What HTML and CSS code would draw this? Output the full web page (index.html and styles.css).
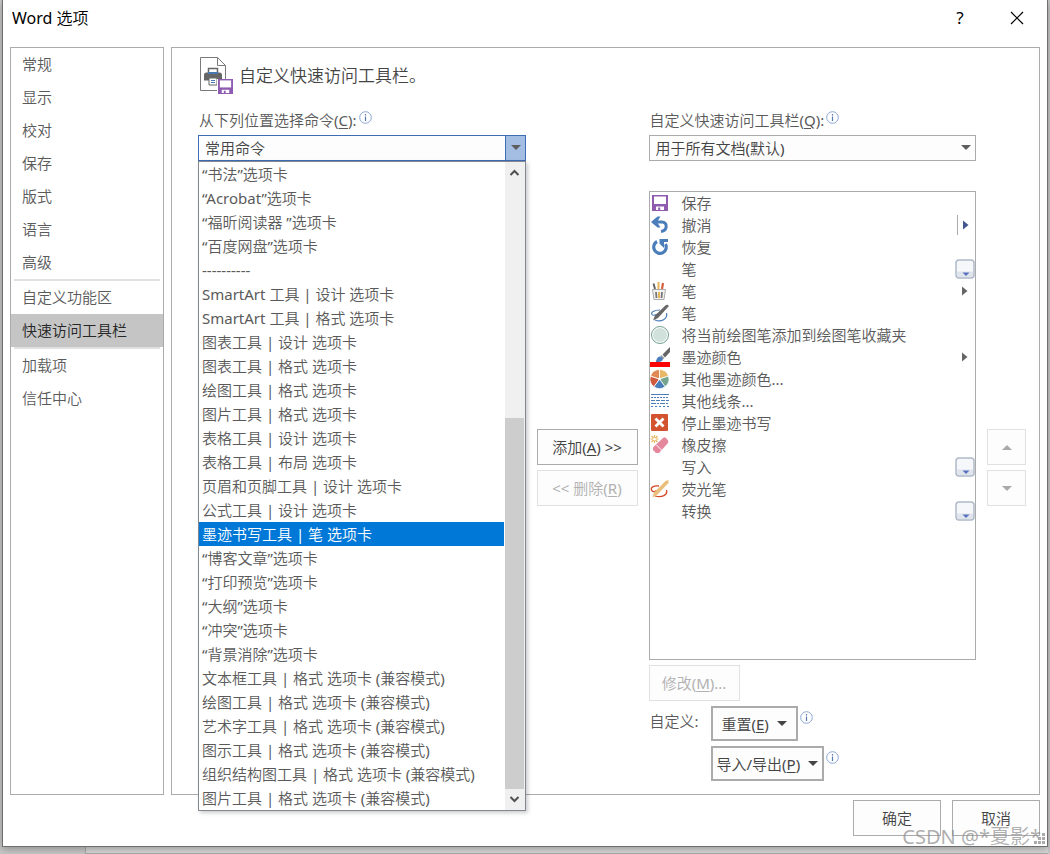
FILE: index.html
```html
<!DOCTYPE html>
<html lang="zh-CN">
<head>
  <meta charset="UTF-8">
  <meta name="viewport" content="width=device-width, initial-scale=1.0">
  <title>Word 选项</title>
  <link rel="stylesheet" href="styles.css">
</head>
<body>
  <!-- 共用图标 -->
  <svg class="symbols" aria-hidden="true">
    <symbol id="info" viewBox="0 0 13 13">
      <circle cx="6.5" cy="6.5" r="5.8" fill="#fff" stroke="#8ba6d3"/>
      <path d="M6.5 5.5v4.5M6.5 3v1.4" stroke="#5878b0" stroke-width="1.2"/>
    </symbol>
    <symbol id="gallery" viewBox="0 0 20 20">
      <rect x="1" y="1" width="18" height="18" rx="3" fill="#f5f7fa" stroke="#afbac8" stroke-width="1.5"/>
      <path d="M2 12.5h16v4q0 1.5-1.5 1.5h-13q-1.5 0-1.5-1.5z" fill="#e0e4ec"/>
      <path d="M7.500 13.500h7l-3.500 3.500z" fill="#5871c0"/>
    </symbol>
    <symbol id="right" viewBox="0 0 6 10">
      <path d="M0 .5l5.500 4.500L0 9.500z" fill="#666"/>
    </symbol>
    <symbol id="floppy" viewBox="0 0 16 16">
      <path d="M0 0h16v16H0z" fill="#8e5bb0"/>
      <path d="M2 1.500h12V9H2z" fill="#fff"/>
      <path d="M4 11.500h8V15H4z" fill="#fff"/>
      <path d="M6.200 12.500h2V15h-2z" fill="#8e5bb0"/>
    </symbol>
  </svg>

  <div class="dialog">
    <header class="titlebar">
      <h1>Word 选项</h1>
      <button class="title-btn" type="button" aria-label="帮助">?</button>
      <button class="title-btn" type="button" aria-label="关闭">
        <svg width="14" height="14" viewBox="0 0 14 14"><path d="M1 1l12 12M13 1L1 13" stroke="#000" stroke-width="1.2"/></svg>
      </button>
    </header>

    <div class="main">
      <nav class="sidebar">
        <a href="#">常规</a>
        <a href="#">显示</a>
        <a href="#">校对</a>
        <a href="#">保存</a>
        <a href="#">版式</a>
        <a href="#">语言</a>
        <a href="#">高级</a>
        <hr>
        <a href="#">自定义功能区</a>
        <a href="#" class="active">快速访问工具栏</a>
        <hr>
        <a href="#">加载项</a>
        <a href="#">信任中心</a>
      </nav>

      <section class="panel">
        <div class="heading">
          <svg width="35" height="38" viewBox="0 0 35 38">
            <path d="M1.500.5h17l8 8v25h-25z" fill="#fff" stroke="#7a7a7a"/>
            <path d="M18.500.5v8h8" fill="none" stroke="#7a7a7a"/>
            <path d="M9.500 17v-5.500h9V17" fill="#fff" stroke="#666" stroke-width="1.5"/>
            <path d="M5 18q0-2.500 2.500-2.500H9V17h10v-1.500h1.500q2.500 0 2.500 2.500v5.500H5z" fill="#666"/>
            <path d="M9 16h10" stroke="#4878b0" stroke-width="2"/>
            <path d="M10 21h8v7h-8z" fill="#fff" stroke="#666"/>
            <path d="M12 23.500h4M12 25.500h4" stroke="#4878b0"/>
            <path d="M18 22h17v16H18z" fill="#fff"/>
            <use href="#floppy" x="19" y="22" width="15" height="15"/>
          </svg>
          <h2>自定义快速访问工具栏。</h2>
        </div>

        <div class="columns">
          <div class="col">
            <div class="label-row">
              <label for="source">从下列位置选择命令(<u>C</u>):</label>
              <svg class="info"><use href="#info"/></svg>
            </div>
            <div class="select open">
              <select id="source">
                <option>常用命令</option>
              </select>
              <div class="menu">
                <ul role="listbox" aria-label="命令位置">
                  <li role="option">“书法”选项卡</li>
                  <li role="option">“Acrobat”选项卡</li>
                  <li role="option">“福昕阅读器 ”选项卡</li>
                  <li role="option">“百度网盘”选项卡</li>
                  <li role="option">----------</li>
                  <li role="option">SmartArt 工具 | 设计 选项卡</li>
                  <li role="option">SmartArt 工具 | 格式 选项卡</li>
                  <li role="option">图表工具 | 设计 选项卡</li>
                  <li role="option">图表工具 | 格式 选项卡</li>
                  <li role="option">绘图工具 | 格式 选项卡</li>
                  <li role="option">图片工具 | 格式 选项卡</li>
                  <li role="option">表格工具 | 设计 选项卡</li>
                  <li role="option">表格工具 | 布局 选项卡</li>
                  <li role="option">页眉和页脚工具 | 设计 选项卡</li>
                  <li role="option">公式工具 | 设计 选项卡</li>
                  <li role="option" class="selected" aria-selected="true">墨迹书写工具 | 笔 选项卡</li>
                  <li role="option">“博客文章”选项卡</li>
                  <li role="option">“打印预览”选项卡</li>
                  <li role="option">“大纲”选项卡</li>
                  <li role="option">“冲突”选项卡</li>
                  <li role="option">“背景消除”选项卡</li>
                  <li role="option">文本框工具 | 格式 选项卡 (兼容模式)</li>
                  <li role="option">绘图工具 | 格式 选项卡 (兼容模式)</li>
                  <li role="option">艺术字工具 | 格式 选项卡 (兼容模式)</li>
                  <li role="option">图示工具 | 格式 选项卡 (兼容模式)</li>
                  <li role="option">组织结构图工具 | 格式 选项卡 (兼容模式)</li>
                  <li role="option">图片工具 | 格式 选项卡 (兼容模式)</li>
                </ul>
                <div class="scrollbar">
                  <svg width="20" height="20" viewBox="0 0 20 20"><path d="M5.500 13L9.500 9l4 4" fill="none" stroke="#505050" stroke-width="2"/></svg>
                  <div class="thumb"></div>
                  <svg width="20" height="20" viewBox="0 0 20 20"><path d="M5.500 7l4 4 4-4" fill="none" stroke="#505050" stroke-width="2"/></svg>
                </div>
              </div>
            </div>
          </div>

          <div class="middle">
            <button type="button">添加(<u>A</u>) &gt;&gt;</button>
            <button type="button" disabled>&lt;&lt; 删除(<u>R</u>)</button>
          </div>

          <div class="col">
            <div class="label-row">
              <label for="target">自定义快速访问工具栏(<u>Q</u>):</label>
              <svg class="info"><use href="#info"/></svg>
            </div>
            <div class="select">
              <select id="target">
                <option>用于所有文档(默认)</option>
              </select>
            </div>
            <ul class="commands">
              <li><svg class="icon" viewBox="0 0 20 20"><use href="#floppy" x="2" y="2" width="16" height="16"/></svg>保存</li>
              <li>
                <svg class="icon" viewBox="0 0 20 20"><path d="M3 7h9c5.500 0 6 8.500-1 9.500" fill="none" stroke="#4a7ebb" stroke-width="3"/><path d="M1 7l6.500-5.500h3L7 7l3.500 5.500h-3z" fill="#4a7ebb"/></svg>撤消
                <span class="split"><svg width="6" height="10"><path d="M0 .5L5.500 5 0 9.500z" fill="#43558f"/></svg></span>
              </li>
              <li><svg class="icon" viewBox="0 0 20 20"><path d="M7 4.500A6.300 6.300 0 1 0 15.500 7" fill="none" stroke="#4a7ebb" stroke-width="3.200"/><path d="M9.500 2H18v3h-4v6L9.500 6.500z" fill="#4a7ebb"/></svg>恢复</li>
              <li><span class="icon"></span>笔<svg class="gallery"><use href="#gallery"/></svg></li>
              <li>
                <svg class="icon" viewBox="0 0 20 20"><path d="M5 8L3.500 2.500" stroke="#666" stroke-width="2"/><path d="M8.500 8V1" stroke="#e8b45a" stroke-width="2"/><path d="M12 8l1-6" stroke="#d2603f" stroke-width="2.200"/><path d="M2.500 8.500h13l-1.500 10H4z" fill="#f2f2f2" stroke="#aaa"/><path d="M6 11l.5 6M12 11l-.5 6" stroke="#777" stroke-width="1.800"/><path d="M9 11v6" stroke="#e8b45a" stroke-width="2"/></svg>笔
                <svg class="arrow"><use href="#right"/></svg>
              </li>
              <li><svg class="icon" viewBox="0 0 20 20"><path d="M10 7C4 7 .5 9.500 2 11.500s5 0 7-1M5 17c6 2.500 13-1 11.500-7" fill="none" stroke="#4a7ebb" stroke-width="1.200"/><path d="M3 17.500l2-5L16 2q3-1 2.500 1.500L8 15z" fill="#666"/></svg>笔</li>
              <li><svg class="icon" viewBox="0 0 20 20"><circle cx="10" cy="10" r="8.500" fill="#fff" stroke="#70a090"/><circle cx="10" cy="10" r="7" fill="#d0e2db"/></svg>将当前绘图笔添加到绘图笔收藏夹</li>
              <li>
                <svg class="icon" viewBox="0 0 20 20"><path d="M12.500 7.500L20 0v5l-5 5.500z" fill="#666"/><path d="M11.500 8l3 3-1 1-3-3z" fill="#999"/><path d="M6 14c1-4 3-5 5-4.500l2 2c0 2-2 4-7 3.500z" fill="#4a7ebb"/><path d="M0 15h20v5H0z" fill="#f00"/></svg>墨迹颜色
                <svg class="arrow"><use href="#right"/></svg>
              </li>
              <li><svg class="icon" viewBox="0 0 20 20"><g stroke="#fff" stroke-width=".8"><path d="M9.500 10V.5a9.500 9.500 0 0 1 9 6.600z" fill="#e9b867"/><path d="M9.500 10l9-2.900a9.500 9.500 0 0 1-3.400 10.600z" fill="#75a58f"/><path d="M9.500 10l5.600 7.700a9.500 9.500 0 0 1-11.200 0z" fill="#4a7ebb"/><path d="M9.500 10l-5.600 7.700A9.500 9.500 0 0 1 .5 7.100z" fill="#cf5a3d"/><path d="M9.500 10l-9-2.900a9.500 9.500 0 0 1 9-6.600z" fill="#df8a55"/></g><circle cx="9.500" cy="10" r="1.300" fill="#fff"/></svg>其他墨迹颜色...</li>
              <li><svg class="icon" viewBox="0 0 20 20"><g stroke="#4a7ebb"><path d="M1 3.500h18"/><path d="M1 6.500h18" stroke-dasharray="2 1"/><path d="M1 9.500h18" stroke-dasharray="4 1"/><path d="M1 12.500h18" stroke-dasharray="5 1 2 1"/><path d="M1 15.500h18" stroke-dasharray="2 2"/></g></svg>其他线条...</li>
              <li><svg class="icon" viewBox="0 0 20 20"><rect x="1" y="1" width="17" height="17" rx="1" fill="#d35230"/><path d="M5.500 5.500l8 8M13.500 5.500l-8 8" stroke="#fff" stroke-width="2.800"/></svg>停止墨迹书写</li>
              <li><svg class="icon" viewBox="0 0 20 20"><path d="M4.500 0v8M.5 4h8M1.500 1l6 6M7.500 1l-6 6" stroke="#e8b45a" stroke-width="1.200"/><circle cx="4.500" cy="4" r="1.500" fill="#fff"/><path d="M13 3q1.500-1.500 3 0l2 2.500q1 1.500-.5 3L9 18H6l-3-3v-2.500z" fill="#e5879d"/><path d="M6.500 10l5 5" stroke="#fff" stroke-width="1"/></svg>橡皮擦</li>
              <li><span class="icon"></span>写入<svg class="gallery"><use href="#gallery"/></svg></li>
              <li><svg class="icon" viewBox="0 0 20 20"><path d="M9 7C3 6.500.5 8.500 1.500 11s3.500 1.500 5 .5M5 17c7 2 13-1 11.500-6" fill="none" stroke="#d24726" stroke-width="1.300"/><path d="M2.500 18.500l1.500-5L15.500 2l3-1v3L7 16z" fill="#e9bf7b"/></svg>荧光笔</li>
              <li><span class="icon"></span>转换<svg class="gallery"><use href="#gallery"/></svg></li>
            </ul>
            <button class="modify" type="button" disabled>修改(<u>M</u>)...</button>
            <div class="customize">
              <span class="customize-label">自定义:</span>
              <div class="menu-btn-row">
                <button class="menu-btn" type="button"><span>重置(<u>E</u>)</span></button>
                <svg class="info"><use href="#info"/></svg>
              </div>
              <div class="menu-btn-row second">
                <button class="menu-btn" type="button"><span>导入/导出(<u>P</u>)</span></button>
                <svg class="info"><use href="#info"/></svg>
              </div>
            </div>
          </div>

          <div class="order">
            <button type="button" disabled aria-label="上移"><svg width="10" height="5"><path d="M0 5l5-5 5 5z" fill="#aaa"/></svg></button>
            <button type="button" disabled aria-label="下移"><svg width="10" height="5"><path d="M0 0l5 5 5-5z" fill="#aaa"/></svg></button>
          </div>
        </div>
      </section>
    </div>

    <footer class="footer">
      <button type="button">确定</button>
      <button type="button">取消</button>
    </footer>
    <svg class="grip" width="11" height="11" viewBox="0 0 11 11"><path d="M8 0h3v3H8zM4 4h3v3H4zM8 4h3v3H8zM0 8h3v3H0zM4 8h3v3H4zM8 8h3v3H8z" fill="#aaa"/></svg>
    <div class="watermark">CSDN @*夏影*</div>
  </div>
  <div class="backdrop-edge"></div>
</body>
</html>
```
FILE: styles.css
```css
* {
  box-sizing: border-box;
}
body {
  display: flex;
  flex-direction: column;
  min-height: 100vh;
  margin: 0;
  padding: 0 2px;
  overflow: hidden;
  background: #c8c8c8;
  color: #5a5a5a;
  font-family: "Noto Sans", "Noto Sans CJK SC DemiLight", "Noto Sans CJK SC Light", "Noto Sans CJK SC", sans-serif;
  font-size: 15px;
  line-height: 22px;
}
h1, h2, ul {
  margin: 0;
  padding: 0;
  font-weight: inherit;
}
ul {
  list-style: none;
}
svg {
  display: block;
  flex: none;
}
u {
  text-underline-offset: 2px;
}
.symbols {
  position: absolute;
  width: 0;
  height: 0;
}
.dialog {
  position: relative;
  display: flex;
  flex: 1;
  flex-direction: column;
  border: 1px solid #6e6e6e;
  border-top: 0;
  background: #fff;
  box-shadow: 0 2px 8px rgba(0, 0, 0, 0.3);
}
.backdrop-edge {
  height: 7px;
  margin-left: 83px;
  border-bottom: 1px solid #aaa;
  border-left: 1px solid #aaa;
  background: #d8d8d8;
}

/* 标题栏 */
.titlebar {
  display: flex;
  align-items: center;
  height: 47px;
  padding: 0 7px 11px 9px;
  color: #000;
}
.titlebar h1 {
  flex: 1;
  font-size: 16px;
}
.title-btn {
  display: flex;
  align-items: center;
  justify-content: center;
  width: 46px;
  height: 32px;
  margin-left: 11px;
  padding: 0;
  border: 0;
  background: none;
  color: #000;
  font: inherit;
  font-size: 17px;
}

.main {
  display: flex;
  flex: 1;
  gap: 7px;
  padding: 0 7px;
}

/* 左侧导航 */
.sidebar {
  width: 154px;
  border: 1px solid #ababab;
}
.sidebar a {
  display: block;
  padding-left: 11px;
  color: #5a5a5a;
  line-height: 33px;
  text-decoration: none;
}
.sidebar .active {
  background: #c5c5c5;
  color: #262626;
}
.sidebar hr {
  height: 2px;
  margin: 0 3px;
  border: 0;
  background: #e1e1e1;
}

.panel {
  flex: 1;
  padding: 0 13px 13px 26px;
  border: 1px solid #ababab;
}
.heading {
  display: flex;
  align-items: center;
  gap: 5px;
  height: 59px;
  padding-bottom: 4px;
  padding-left: 1px;
  color: #444;
}
.heading h2 {
  font-size: 17px;
}
.columns {
  display: grid;
  grid-template-columns: 1fr 101px 1fr 39px;
  gap: 11px;
}
.label-row {
  display: flex;
  height: 28px;
  padding-top: 2px;
  padding-left: 1px;
}
.info {
  width: 13px;
  height: 13px;
  margin-top: 2px;
  margin-left: 2px;
}

/* 下拉框 */
.select {
  position: relative;
}
.select select {
  display: block;
  width: 100%;
  height: 26px;
  padding: 0 6px;
  border: 1px solid #ababab;
  border-radius: 0;
  background: #fdfdfd;
  color: #444;
  font: inherit;
  appearance: none;
}
.select::after {
  content: "";
  position: absolute;
  top: 10px;
  right: 5px;
  border: 5px solid transparent;
  border-top-color: #5e5e5e;
  border-bottom: 0;
}
.select.open select {
  border-color: #3e6db5;
  background: linear-gradient(to left, #a3bde3 19px, #3e6db5 19px, #3e6db5 20px, #fdfdfd 20px);
}
.menu {
  position: absolute;
  top: 26px;
  left: 0;
  right: 0;
  display: flex;
  border: 1px solid #828790;
  background: #fff;
  box-shadow: 2px 2px 4px rgba(0, 0, 0, 0.2);
}
.menu ul {
  flex: 1;
}
.menu li {
  height: 24px;
  padding-left: 3px;
  line-height: 24px;
  white-space: nowrap;
}
.menu .selected {
  margin-right: 1px;
  background: #0078d7;
  color: #fff;
}
.scrollbar {
  display: flex;
  flex-direction: column;
  justify-content: flex-end;
  width: 20px;
  background: #f0f0f0;
}
.scrollbar svg:first-child {
  margin-bottom: auto;
}
.thumb {
  height: 371px;
  margin-right: 1px;
  margin-bottom: 1px;
  background: #cdcdcd;
}

/* 按钮 */
.middle button,
.order button,
.modify,
.menu-btn,
.footer button {
  height: 36px;
  padding: 0;
  border: 1px solid #ababab;
  background: #fdfdfd;
  color: #444;
  font: inherit;
}
.middle,
.order {
  display: flex;
  flex-direction: column;
  gap: 5px;
  padding-top: 322px;
}
.middle button:disabled,
.order button:disabled,
.modify:disabled {
  border-color: #e1e1e1;
  color: #b1b1b1;
}
.order button {
  display: flex;
  align-items: center;
  justify-content: center;
}

/* 命令列表 */
.commands {
  height: 469px;
  margin-top: 30px;
  border: 1px solid #ababab;
}
.commands li {
  display: flex;
  align-items: center;
  height: 22px;
}
.icon {
  width: 20px;
  height: 20px;
  margin-right: 12px;
}
.split {
  display: flex;
  align-items: center;
  height: 20px;
  margin-right: 6px;
  margin-left: auto;
  padding-left: 5px;
  border-left: 1px solid #ababab;
}
.arrow {
  width: 6px;
  height: 10px;
  margin-right: 7px;
  margin-left: auto;
}
.gallery {
  width: 20px;
  height: 20px;
  margin-left: auto;
}
.modify {
  width: 91px;
  margin-top: 5px;
}
.customize {
  display: grid;
  grid-template-columns: 62px 1fr;
  row-gap: 5px;
  margin-top: 5px;
}
.customize-label {
  padding-top: 4px;
  padding-left: 1px;
}
.menu-btn-row {
  display: flex;
}
.menu-btn-row.second {
  grid-column: 2;
}
.menu-btn {
  display: flex;
  align-items: center;
  gap: 8px;
  height: 35px;
  padding: 0 9px;
  border-width: 2px;
}
.second .menu-btn {
  padding: 0 4px;
}
.menu-btn::after {
  content: "";
  border: 5px solid transparent;
  border-top-color: #444;
  border-bottom: 0;
}
.menu-btn-row .info {
  margin-top: 5px;
}

.footer {
  display: flex;
  justify-content: flex-end;
  gap: 11px;
  padding: 5px 7px 10px;
}
.footer button {
  width: 88px;
}
.grip {
  position: absolute;
  right: 2px;
  bottom: 2px;
}
.watermark {
  position: absolute;
  right: 6px;
  bottom: -4px;
  color: rgba(140, 140, 140, 0.7);
  font-size: 20px;
  line-height: 26px;
}
```
